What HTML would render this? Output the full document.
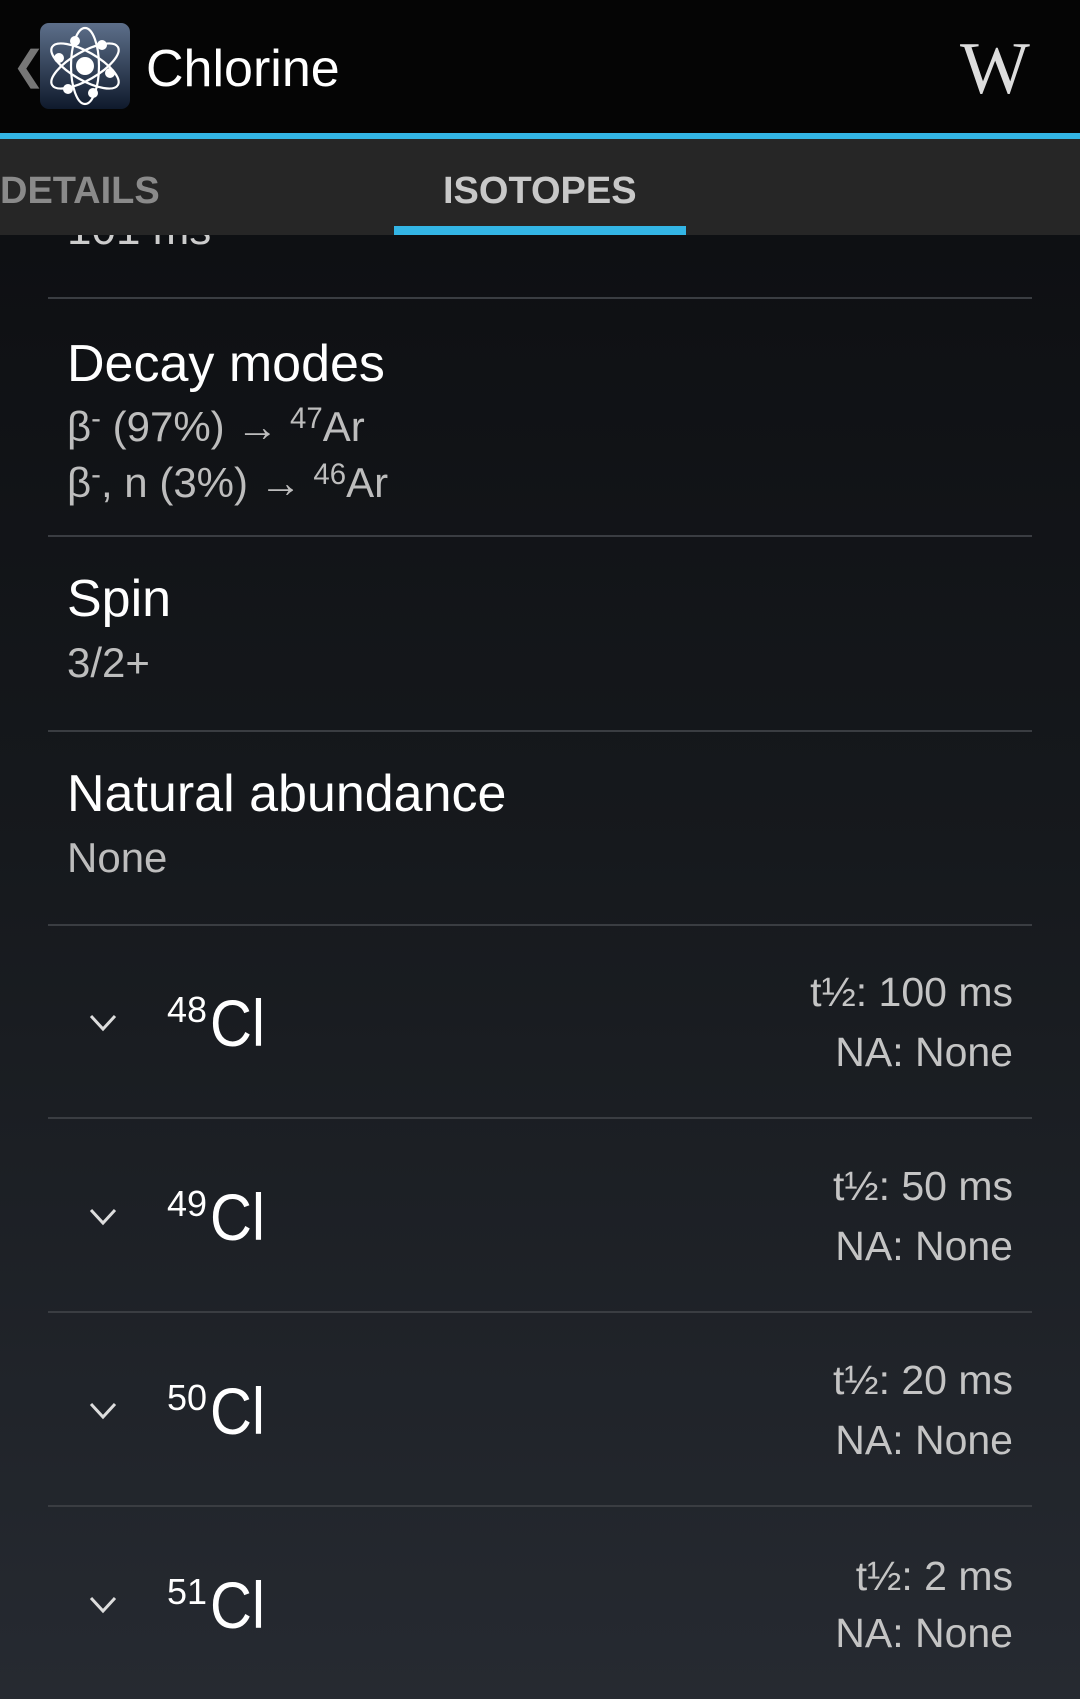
<!DOCTYPE html>
<html><head><meta charset="utf-8"><style>
*{margin:0;padding:0;box-sizing:border-box}
body{width:1080px;height:1699px;overflow:hidden;font-family:"Liberation Sans",sans-serif;background:linear-gradient(#0b0c0f 0%,#16191d 50%,#262a31 100%);position:relative}
.t{position:absolute;line-height:1;white-space:nowrap}
.h{color:#fff;font-size:52px}
.v{color:#bdbdbd;font-size:42px}
.hr{position:absolute;left:48px;width:984px;height:2px;background:#3a3d42}
.r{right:67px;text-align:right;color:#c4c4c4;font-size:41px}
sup{font-size:0.7em;vertical-align:0.45em;line-height:0}
.chev{position:absolute;left:88px;width:30px;height:20px}
.cl{position:absolute;left:167px;line-height:1;white-space:nowrap;color:#fff}
.cl b{font-weight:normal;font-size:36px;position:relative;top:-24px}
.cl span{font-size:66px;display:inline-block;transform:scaleX(.88);transform-origin:left;margin-left:3px}
</style></head><body>
<div class="t v" style="left:67px;top:208px;font-size:44px;color:#ccc">101 ms</div>
<div style="position:absolute;left:0;top:0;width:1080px;height:133px;background:#050505"></div>
<div style="position:absolute;left:0;top:133px;width:1080px;height:6px;background:#33b5e5"></div>
<div style="position:absolute;left:0;top:139px;width:1080px;height:96px;background:#262626"></div>
<div class="t" style="left:0;top:172px;font-size:38px;font-weight:bold;color:#8a8a8a">DETAILS</div>
<div class="t" style="left:443px;top:172px;font-size:38px;font-weight:bold;color:#c8c8c8">ISOTOPES</div>
<div style="position:absolute;left:394px;top:226px;width:292px;height:9px;background:#33b5e5"></div>
<div class="t" style="left:12px;top:46px;font-size:40px;color:#777">❮</div>
<svg style="position:absolute;left:40px;top:23px" width="90" height="86" viewBox="0 0 90 86">
<defs><linearGradient id="g" x1="0" y1="0" x2="0" y2="1"><stop offset="0" stop-color="#5d6f8a"/><stop offset="1" stop-color="#0f1a2c"/></linearGradient></defs>
<rect x="0" y="0" width="90" height="86" rx="9" fill="url(#g)"/>
<g fill="none" stroke="#fff" stroke-width="2.2">
<ellipse cx="45" cy="43" rx="14" ry="38"/>
<ellipse cx="45" cy="43" rx="14" ry="38" transform="rotate(60 45 43)"/>
<ellipse cx="45" cy="43" rx="14" ry="38" transform="rotate(-60 45 43)"/></g>
<g fill="#fff"><circle cx="45" cy="43" r="9"/><circle cx="35" cy="18" r="5"/><circle cx="62" cy="22" r="5"/><circle cx="19" cy="35" r="5"/><circle cx="70" cy="50" r="5"/><circle cx="28" cy="66" r="5"/><circle cx="53" cy="70" r="5"/></g>
</svg>
<div class="t" style="left:146px;top:43px;font-size:52px;color:#fff">Chlorine</div>
<div class="t" style="left:960px;top:32px;font-size:74px;color:#ddd;font-family:'Liberation Serif',serif">W</div>

<div class="hr" style="top:297px"></div>
<div class="t h" style="left:67px;top:338px">Decay modes</div>
<div class="t v" style="left:67px;top:406px">β<sup>-</sup> (97%) → <sup>47</sup>Ar</div>
<div class="t v" style="left:67px;top:462px">β<sup>-</sup>, n (3%) → <sup>46</sup>Ar</div>
<div class="hr" style="top:535px"></div>
<div class="t h" style="left:67px;top:573px">Spin</div>
<div class="t v" style="left:67px;top:642px">3/2+</div>
<div class="hr" style="top:730px"></div>
<div class="t h" style="left:67px;top:768px">Natural abundance</div>
<div class="t v" style="left:67px;top:837px">None</div>
<div class="hr" style="top:924px"></div>

<div class="chev" style="top:1013px"><svg width="30" height="20"><path d="M3 3 L15 16 L27 3" fill="none" stroke="#ddd" stroke-width="3"/></svg></div>
<div class="cl" style="top:990px"><b>48</b><span>Cl</span></div>
<div class="t r" style="top:972px">t½: 100 ms</div>
<div class="t r" style="top:1032px">NA: None</div>
<div class="hr" style="top:1117px"></div>

<div class="chev" style="top:1207px"><svg width="30" height="20"><path d="M3 3 L15 16 L27 3" fill="none" stroke="#ddd" stroke-width="3"/></svg></div>
<div class="cl" style="top:1184px"><b>49</b><span>Cl</span></div>
<div class="t r" style="top:1166px">t½: 50 ms</div>
<div class="t r" style="top:1226px">NA: None</div>
<div class="hr" style="top:1311px"></div>

<div class="chev" style="top:1401px"><svg width="30" height="20"><path d="M3 3 L15 16 L27 3" fill="none" stroke="#ddd" stroke-width="3"/></svg></div>
<div class="cl" style="top:1378px"><b>50</b><span>Cl</span></div>
<div class="t r" style="top:1360px">t½: 20 ms</div>
<div class="t r" style="top:1420px">NA: None</div>
<div class="hr" style="top:1505px"></div>

<div class="chev" style="top:1595px"><svg width="30" height="20"><path d="M3 3 L15 16 L27 3" fill="none" stroke="#ddd" stroke-width="3"/></svg></div>
<div class="cl" style="top:1572px"><b>51</b><span>Cl</span></div>
<div class="t r" style="top:1556px">t½: 2 ms</div>
<div class="t r" style="top:1613px">NA: None</div>
</body></html>
